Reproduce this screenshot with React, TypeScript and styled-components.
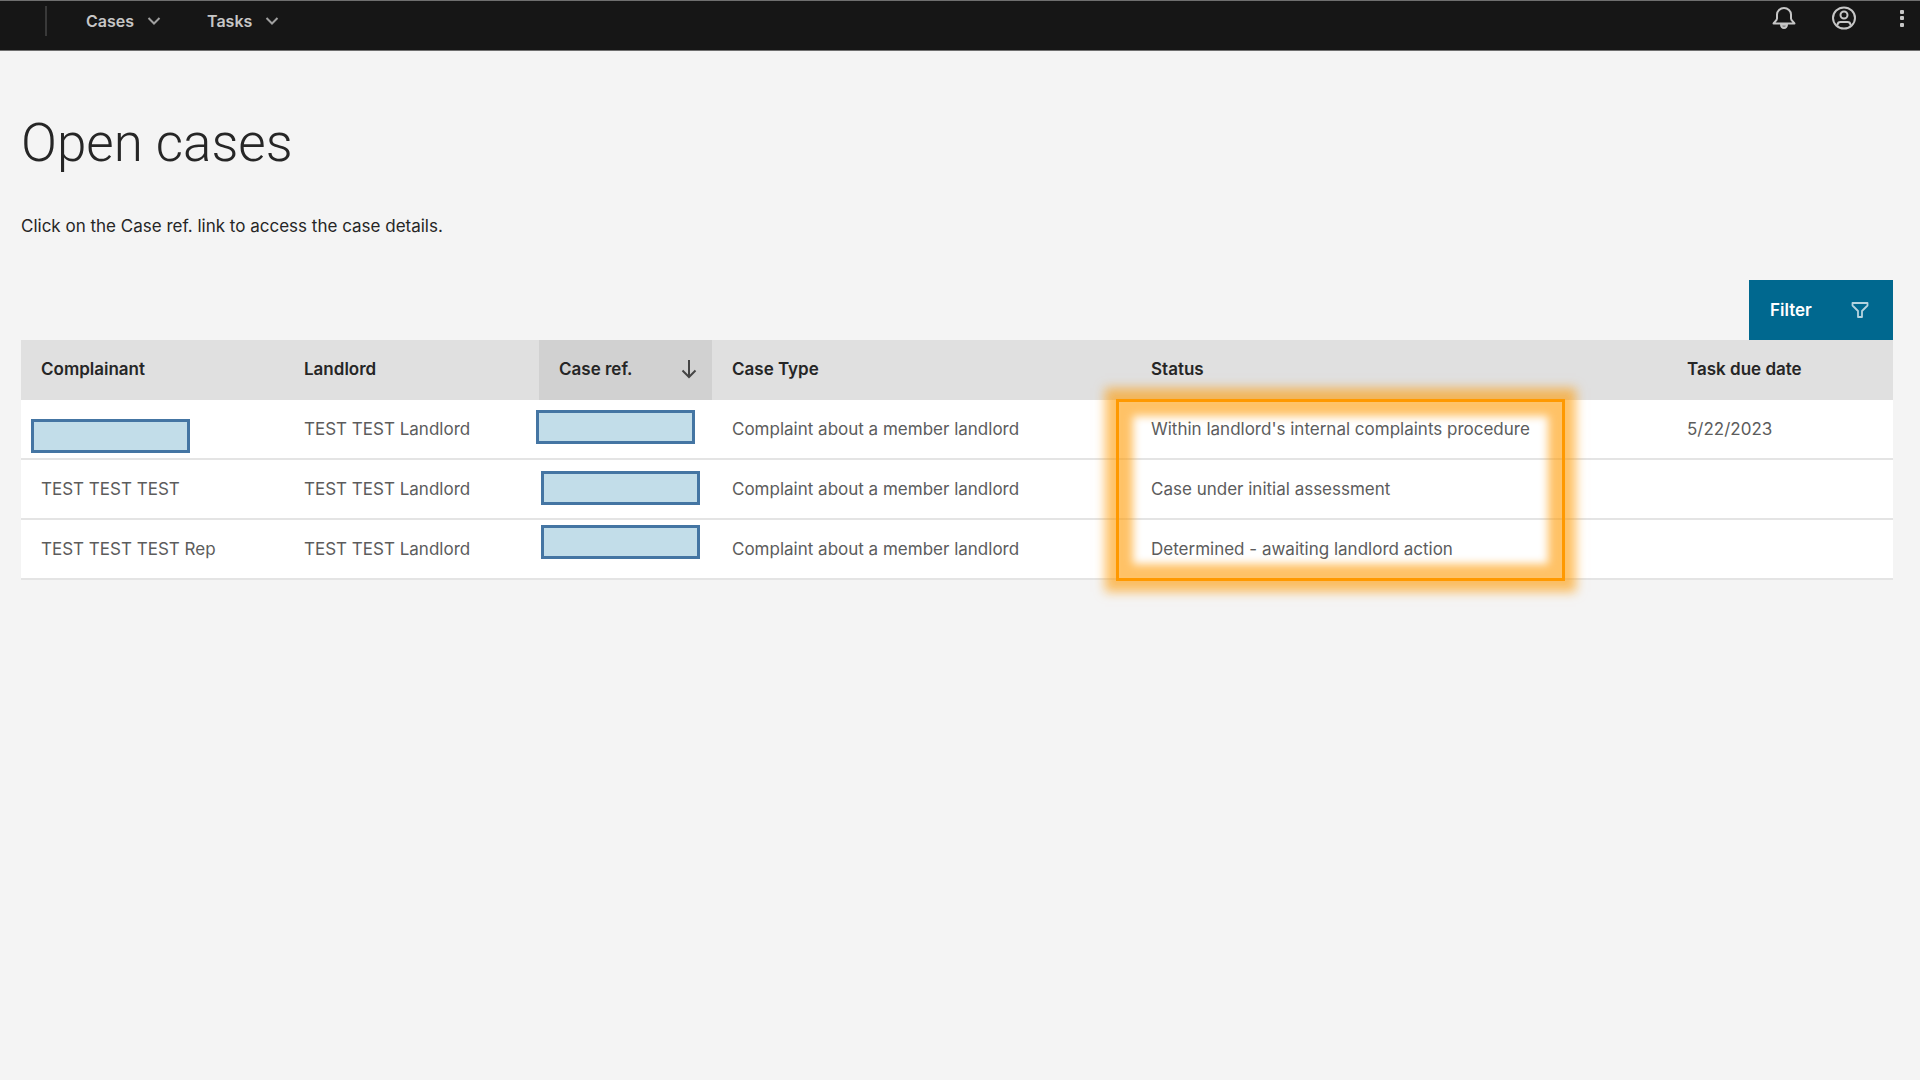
import React from "react";
import styled, { createGlobalStyle } from "styled-components";

const GlobalStyle = createGlobalStyle`
  *, *::before, *::after { box-sizing: border-box; }
  body {
    margin: 0;
    background: #f4f4f4;
    color: #262626;
    font-family: Inter, "Noto Sans", sans-serif;
    font-size: 17px;
    line-height: 24px;
  }
`;

const TopBar = styled.header`
  display: flex;
  align-items: flex-start;
  justify-content: space-between;
  height: 51px;
  padding: 0 8px 0 45px;
  background: #161616;
  border-top: 1px solid #6f6f6f;
  border-bottom: 1px solid #6f6f6f;
`;

const Menus = styled.nav`
  display: flex;
  align-items: center;
  gap: 46px;
  height: 40px;
`;

const Divider = styled.span`
  width: 2px;
  height: 30px;
  margin-right: -7px;
  background: #393939;
`;

const MenuButton = styled.button`
  display: flex;
  align-items: center;
  gap: 13px;
  padding: 0;
  border: 0;
  background: none;
  color: #c6c6c6;
  font: 600 16px/24px Inter, sans-serif;
`;

const Actions = styled.div`
  display: flex;
  align-items: center;
  gap: 36px;
  height: 34px;
`;

const IconButton = styled.button`
  display: flex;
  padding: 0;
  border: 0;
  background: none;
  color: #c6c6c6;
`;

const Page = styled.main`
  padding: 56px 27px 56px 21px;
`;

const Title = styled.h1`
  margin: 0;
  font-family: Roboto, sans-serif;
  font-weight: 300;
  font-size: 53px;
  line-height: 72px;
`;

const Intro = styled.p`
  margin: 35px 0 42px;
`;

const Toolbar = styled.div`
  display: flex;
  justify-content: flex-end;
`;

const FilterButton = styled.button`
  display: flex;
  align-items: center;
  justify-content: space-between;
  width: 144px;
  height: 60px;
  padding: 0 24px 0 21px;
  border: 0;
  background: #00688f;
  color: #ffffff;
  font: 600 17px/24px Inter, sans-serif;
`;

const CaseTable = styled.table`
  width: 100%;
  table-layout: fixed;
  border-collapse: separate;
  border-spacing: 0;
  text-align: left;
`;

const Column = styled.col<{ $width: number }>`
  width: ${(p) => p.$width}px;
`;

const HeadCell = styled.th<{ $sorted?: boolean }>`
  height: 60px;
  padding: 0 15px 2px 20px;
  background: ${(p) => (p.$sorted ? "#d1d1d1" : "#e0e0e0")};
  font-weight: 600;
`;

const SortButton = styled.button`
  display: flex;
  align-items: center;
  justify-content: space-between;
  width: 100%;
  padding: 0;
  border: 0;
  background: none;
  color: inherit;
  font: inherit;
`;

const Cell = styled.td`
  position: relative;
  height: 60px;
  padding: 0 20px;
  background: #ffffff;
  border-bottom: 2px solid #e4e4e4;
  color: #5c5c5c;
`;

const Redaction = styled.span<{ $x: number; $y: number }>`
  position: absolute;
  left: ${(p) => p.$x}px;
  top: ${(p) => p.$y}px;
  width: 159px;
  height: 34px;
  background: #c2dde9;
  border: 3px solid #4475a3;
`;

const Highlight = styled.span`
  position: absolute;
  z-index: 1;
  left: -15px;
  top: -1px;
  width: 449px;
  height: 182px;
  border: 3px solid #ff9900;
  box-shadow: 0 0 10px 11px rgba(255, 153, 0, 0.6), inset 0 0 8px 14px rgba(255, 153, 0, 0.6);
  pointer-events: none;
`;

const Chevron = () => (
  <svg width="14" height="10" viewBox="0 0 14 10" fill="none" stroke="#a0a0a0" strokeWidth="2" aria-hidden="true">
    <path d="M1.500 2L7 7.500 12.500 2" />
  </svg>
);

const Bell = () => (
  <svg width="24" height="24" viewBox="0 0 24 24" fill="none" stroke="currentColor" strokeWidth="2" strokeLinejoin="round" aria-hidden="true">
    <path d="M1.500 17.500h21c0-1.500-3.500-2.500-3.500-5V8.500a7 6.500 0 0 0-14 0v4c0 2.500-3.500 3.500-3.500 5z" />
    <path d="M9 18.500a3 3.500 0 0 0 6 0z" fill="currentColor" fillOpacity="0.6" />
  </svg>
);

const User = () => (
  <svg width="24" height="24" viewBox="0 0 24 24" fill="none" stroke="currentColor" strokeWidth="2" aria-hidden="true">
    <ellipse cx="12" cy="12" rx="11" ry="10.500" />
    <circle cx="12" cy="9" r="3.500" />
    <path d="M5.500 19.500v-1a3 3 0 0 1 3-2.500h7a3 3 0 0 1 3 2.500v1" />
  </svg>
);

const Dots = () => (
  <svg width="20" height="24" viewBox="0 0 20 24" fill="currentColor" aria-hidden="true">
    <rect x="8" y="4" width="4" height="4" rx="1" />
    <rect x="8" y="10" width="4" height="4" rx="1" />
    <rect x="8" y="17" width="4" height="4" rx="1" />
  </svg>
);

const Funnel = () => (
  <svg width="18" height="18" viewBox="0 0 18 18" fill="none" stroke="#b5d3df" strokeWidth="1.800" aria-hidden="true">
    <path d="M1.500 2h15v2.500L11 10v6H7v-6L1.500 4.500z" strokeLinejoin="round" />
  </svg>
);

const ArrowDown = () => (
  <svg width="16" height="20" viewBox="0 0 16 20" fill="none" stroke="#454545" strokeWidth="2" aria-hidden="true">
    <path d="M8 1v17M1.500 11.500L8 18l6.500-6.500" />
  </svg>
);

const columnWidths = [263, 255, 173, 419, 536, 226];

const cases = [
  { person: "", personMark: [10, 19], refMark: [-3, 10], status: "Within landlord's internal complaints procedure", due: "5/22/2023" },
  { person: "TEST TEST TEST", refMark: [2, 11], status: "Case under initial assessment", due: "" },
  { person: "TEST TEST TEST Rep", refMark: [2, 5], status: "Determined - awaiting landlord action", due: "" },
];

export default function App() {
  return (
    <>
      <GlobalStyle />
      <TopBar>
        <Menus aria-label="Main">
          <Divider />
          <MenuButton>Cases <Chevron /></MenuButton>
          <MenuButton>Tasks <Chevron /></MenuButton>
        </Menus>
        <Actions>
          <IconButton aria-label="Notifications"><Bell /></IconButton>
          <IconButton aria-label="Account"><User /></IconButton>
          <IconButton aria-label="More options"><Dots /></IconButton>
        </Actions>
      </TopBar>
      <Page>
        <Title>Open cases</Title>
        <Intro>Click on the Case ref. link to access the case details.</Intro>
        <Toolbar>
          <FilterButton>Filter <Funnel /></FilterButton>
        </Toolbar>
        <CaseTable>
          <colgroup>
            {columnWidths.map((w, i) => <Column key={i} $width={w} />)}
          </colgroup>
          <thead>
            <tr>
              <HeadCell scope="col">Complainant</HeadCell>
              <HeadCell scope="col">Landlord</HeadCell>
              <HeadCell scope="col" $sorted aria-sort="descending">
                <SortButton>Case ref. <ArrowDown /></SortButton>
              </HeadCell>
              <HeadCell scope="col">Case Type</HeadCell>
              <HeadCell scope="col">Status</HeadCell>
              <HeadCell scope="col">Task due date</HeadCell>
            </tr>
          </thead>
          <tbody>
            {cases.map((c, i) => (
              <tr key={i}>
                <Cell>
                  {c.person}
                  {c.personMark && <Redaction $x={c.personMark[0]} $y={c.personMark[1]} />}
                </Cell>
                <Cell>TEST TEST Landlord</Cell>
                <Cell><Redaction $x={c.refMark[0]} $y={c.refMark[1]} /></Cell>
                <Cell>Complaint about a member landlord</Cell>
                <Cell>
                  {c.status}
                  {i === 0 && <Highlight />}
                </Cell>
                <Cell>{c.due}</Cell>
              </tr>
            ))}
          </tbody>
        </CaseTable>
      </Page>
    </>
  );
}
